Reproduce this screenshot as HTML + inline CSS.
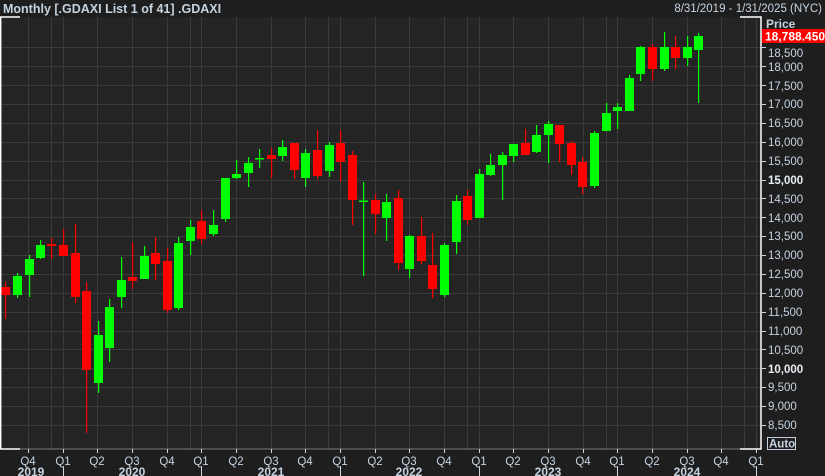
<!DOCTYPE html>
<html><head><meta charset="utf-8"><style>
html,body{margin:0;padding:0;background:#1e1e1e;}
svg{display:block;font-family:"Liberation Sans",Tahoma,sans-serif;}
</style></head><body>
<svg id="s" width="825" height="476" viewBox="0 0 825 476" xmlns="http://www.w3.org/2000/svg">
<rect x="0" y="0" width="825" height="476" fill="#1e1e1e"/>
<rect x="0" y="17" width="761" height="432" fill="#232423"/>
<g id="grid" stroke="#3a3b3a" stroke-width="1"></g>
<g id="c"></g>
<g stroke="#ffffff" stroke-width="1.5" fill="none">
<path d="M20 17 H0.7 V449 H20"/>
<path d="M740 17 H761 V449 H740"/>
</g>
<line x1="20" y1="449" x2="740" y2="449" stroke="#7a7a7a"/>
<g id="ticks" stroke="#cfd8e0"></g>
<text x="3" y="13" font-size="12.5" font-weight="bold" fill="#c5d3e0">Monthly [.GDAXI List 1 of 41] .GDAXI</text>
<text x="822" y="12" font-size="11.5" fill="#c5d3e0" text-anchor="end">8/31/2019 - 1/31/2025 (NYC)</text>
<text x="766" y="28" font-size="12" font-weight="bold" fill="#c5d3e0">Price</text>
<rect x="762" y="29" width="63" height="14" fill="#ff0000"/>
<text x="765" y="40.5" font-size="12" font-weight="bold" fill="#ffffff">18,788.450</text>
<g font-size="11.5" fill="#c5d3e0">
<text x="768" y="57">18,500</text>
<text x="768" y="71">18,000</text>
<text x="768" y="90">17,500</text>
<text x="768" y="108">17,000</text>
<text x="768" y="127">16,500</text>
<text x="768" y="146">16,000</text>
<text x="768" y="165">15,500</text>
<text x="768" y="184" font-weight="bold" fill="#e8eef4">15,000</text>
<text x="768" y="203">14,500</text>
<text x="768" y="222">14,000</text>
<text x="768" y="240">13,500</text>
<text x="768" y="259">13,000</text>
<text x="768" y="278">12,500</text>
<text x="768" y="297">12,000</text>
<text x="768" y="316">11,500</text>
<text x="768" y="335">11,000</text>
<text x="768" y="354">10,500</text>
<text x="768" y="373" font-weight="bold" fill="#e8eef4">10,000</text>
<text x="768" y="391">9,500</text>
<text x="768" y="410">9,000</text>
<text x="768" y="429">8,500</text>
</g>
<rect x="767.5" y="437.5" width="28" height="12" fill="none" stroke="#c5d3e0"/>
<text x="769" y="447.5" font-size="11.5" font-weight="bold" fill="#c5d3e0">Auto</text>
<g font-size="11.5" fill="#c5d3e0" text-anchor="middle">
<text x="28" y="465">Q4</text><text x="63" y="465">Q1</text><text x="97" y="465">Q2</text><text x="132" y="465">Q3</text>
<text x="167" y="465">Q4</text><text x="201" y="465">Q1</text><text x="236" y="465">Q2</text><text x="271" y="465">Q3</text>
<text x="305" y="465">Q4</text><text x="340" y="465">Q1</text><text x="375" y="465">Q2</text><text x="409" y="465">Q3</text>
<text x="444" y="465">Q4</text><text x="479" y="465">Q1</text><text x="513" y="465">Q2</text><text x="548" y="465">Q3</text>
<text x="583" y="465">Q4</text><text x="617" y="465">Q1</text><text x="652" y="465">Q2</text><text x="687" y="465">Q3</text>
<text x="721" y="465">Q4</text><text x="756" y="465">Q1</text>
</g>
<g font-size="12" font-weight="bold" fill="#c5d3e0" text-anchor="middle">
<text x="31" y="476">2019</text><text x="132" y="476">2020</text><text x="271" y="476">2021</text>
<text x="409" y="476">2022</text><text x="548" y="476">2023</text><text x="687" y="476">2024</text>
</g>
</svg>
<script>
var NS="http://www.w3.org/2000/svg";
function el(p,n,a){var e=document.createElementNS(NS,n);for(var k in a)e.setAttribute(k,a[k]);p.appendChild(e);return e;}
var g=document.getElementById('grid');
for(var i=0;i<21;i++){var y=Math.round(425-i*18.88)+0.5;el(g,'line',{x1:0,y1:y,x2:761,y2:y});}
var q=[28,63,97,132,167,201,236,271,305,340,375,409,444,479,513,548,583,617,652,687,721,756];
q.forEach(function(x){el(g,'line',{x1:x+0.5,y1:17,x2:x+0.5,y2:449});});
[51,190,328,467,606,744].forEach(function(x){el(g,'line',{x1:x+0.5,y1:17,x2:x+0.5,y2:449});});
var t=document.getElementById('ticks');
for(var i=0;i<21;i++){var y=Math.round(425-i*18.88)+0.5;el(t,'line',{x1:761,y1:y,x2:766,y2:y});}
q.forEach(function(x){el(t,'line',{x1:x+0.5,y1:449,x2:x+0.5,y2:453});});
[63,201,340,479,617,756].forEach(function(x){el(t,'line',{x1:x+0.5,y1:466,x2:x+0.5,y2:476});});
var C=[[5,287,295,282,319,0],[17,276,295,273,298,1],[29,259,275,255,297,1],[40,245,258,240,259,1],[51,244,246,238,259,0],[63,245,256,229,256,0],[75,253,297,224,303,0],[86,291,370,282,433,0],[98,335,383,321,393,1],[109,307,348,299,362,1],[121,280,297,257,308,1],[132,277,281,242,289,0],[144,256,279,246,279,1],[155,253,264,237,280,0],[167,261,310,248,313,0],[178,243,308,237,310,1],[190,227,241,220,255,1],[201,221,239,210,244,0],[213,225,234,210,236,1],[225,178,219,178,222,1],[236,174,178,160,179,1],[248,163,173,157,187,1],[259,158,159.5,149,168,1],[271,155,159,148,178,0],[282,147,156,140,161,1],[294,143,170,143,179,0],[305,153,178,149,187,1],[317,150,176,130,179,0],[329,145,171,142,177,1],[340,143,162,130,182,0],[352,155,200,151,225,0],[363,200.5,202,182,276,1],[375,200,214,194,234,0],[386,202,218,194,241,1],[398,198,263,190,270,0],[409,236,269,235,278,1],[421,236,261,217,264,0],[432,265,289,233,298,0],[444,245,295,243,297,1],[456,201,242,195,254,1],[467,196,220,190,225,0],[479,174,218,169,218,1],[490,165,175,154,176,1],[502,155,165,152,200,1],[513,144,156,144,162,1],[525,143,155,129,155,0],[536,135,152,125,153,1],[548,124,135,121,163,1],[559,125,144,125,162,0],[571,143,165,141,175,0],[582,162,187,157,194,0],[594,133,186,131,188,1],[606,113,131,103,131,1],[617,107,111,103,129,1],[629,78,111,75,111,1],[640,47,74,46,81,1],[652,47,69,44,81,0],[664,47,69,32,71,1],[675,47,58,36,69,0],[687,47,58,36,66,1],[698,36,50,33,103,1]];
var cg=document.getElementById('c');
C.forEach(function(c){var col=c[5]?'#00ff00':'#ff0000';
el(cg,'rect',{x:c[0],y:c[3],width:1.2,height:c[4]-c[3],fill:col});
el(cg,'rect',{x:c[0]-4,y:c[1],width:9,height:Math.max(1.5,c[2]-c[1]),fill:col});});
</script>
</body></html>
